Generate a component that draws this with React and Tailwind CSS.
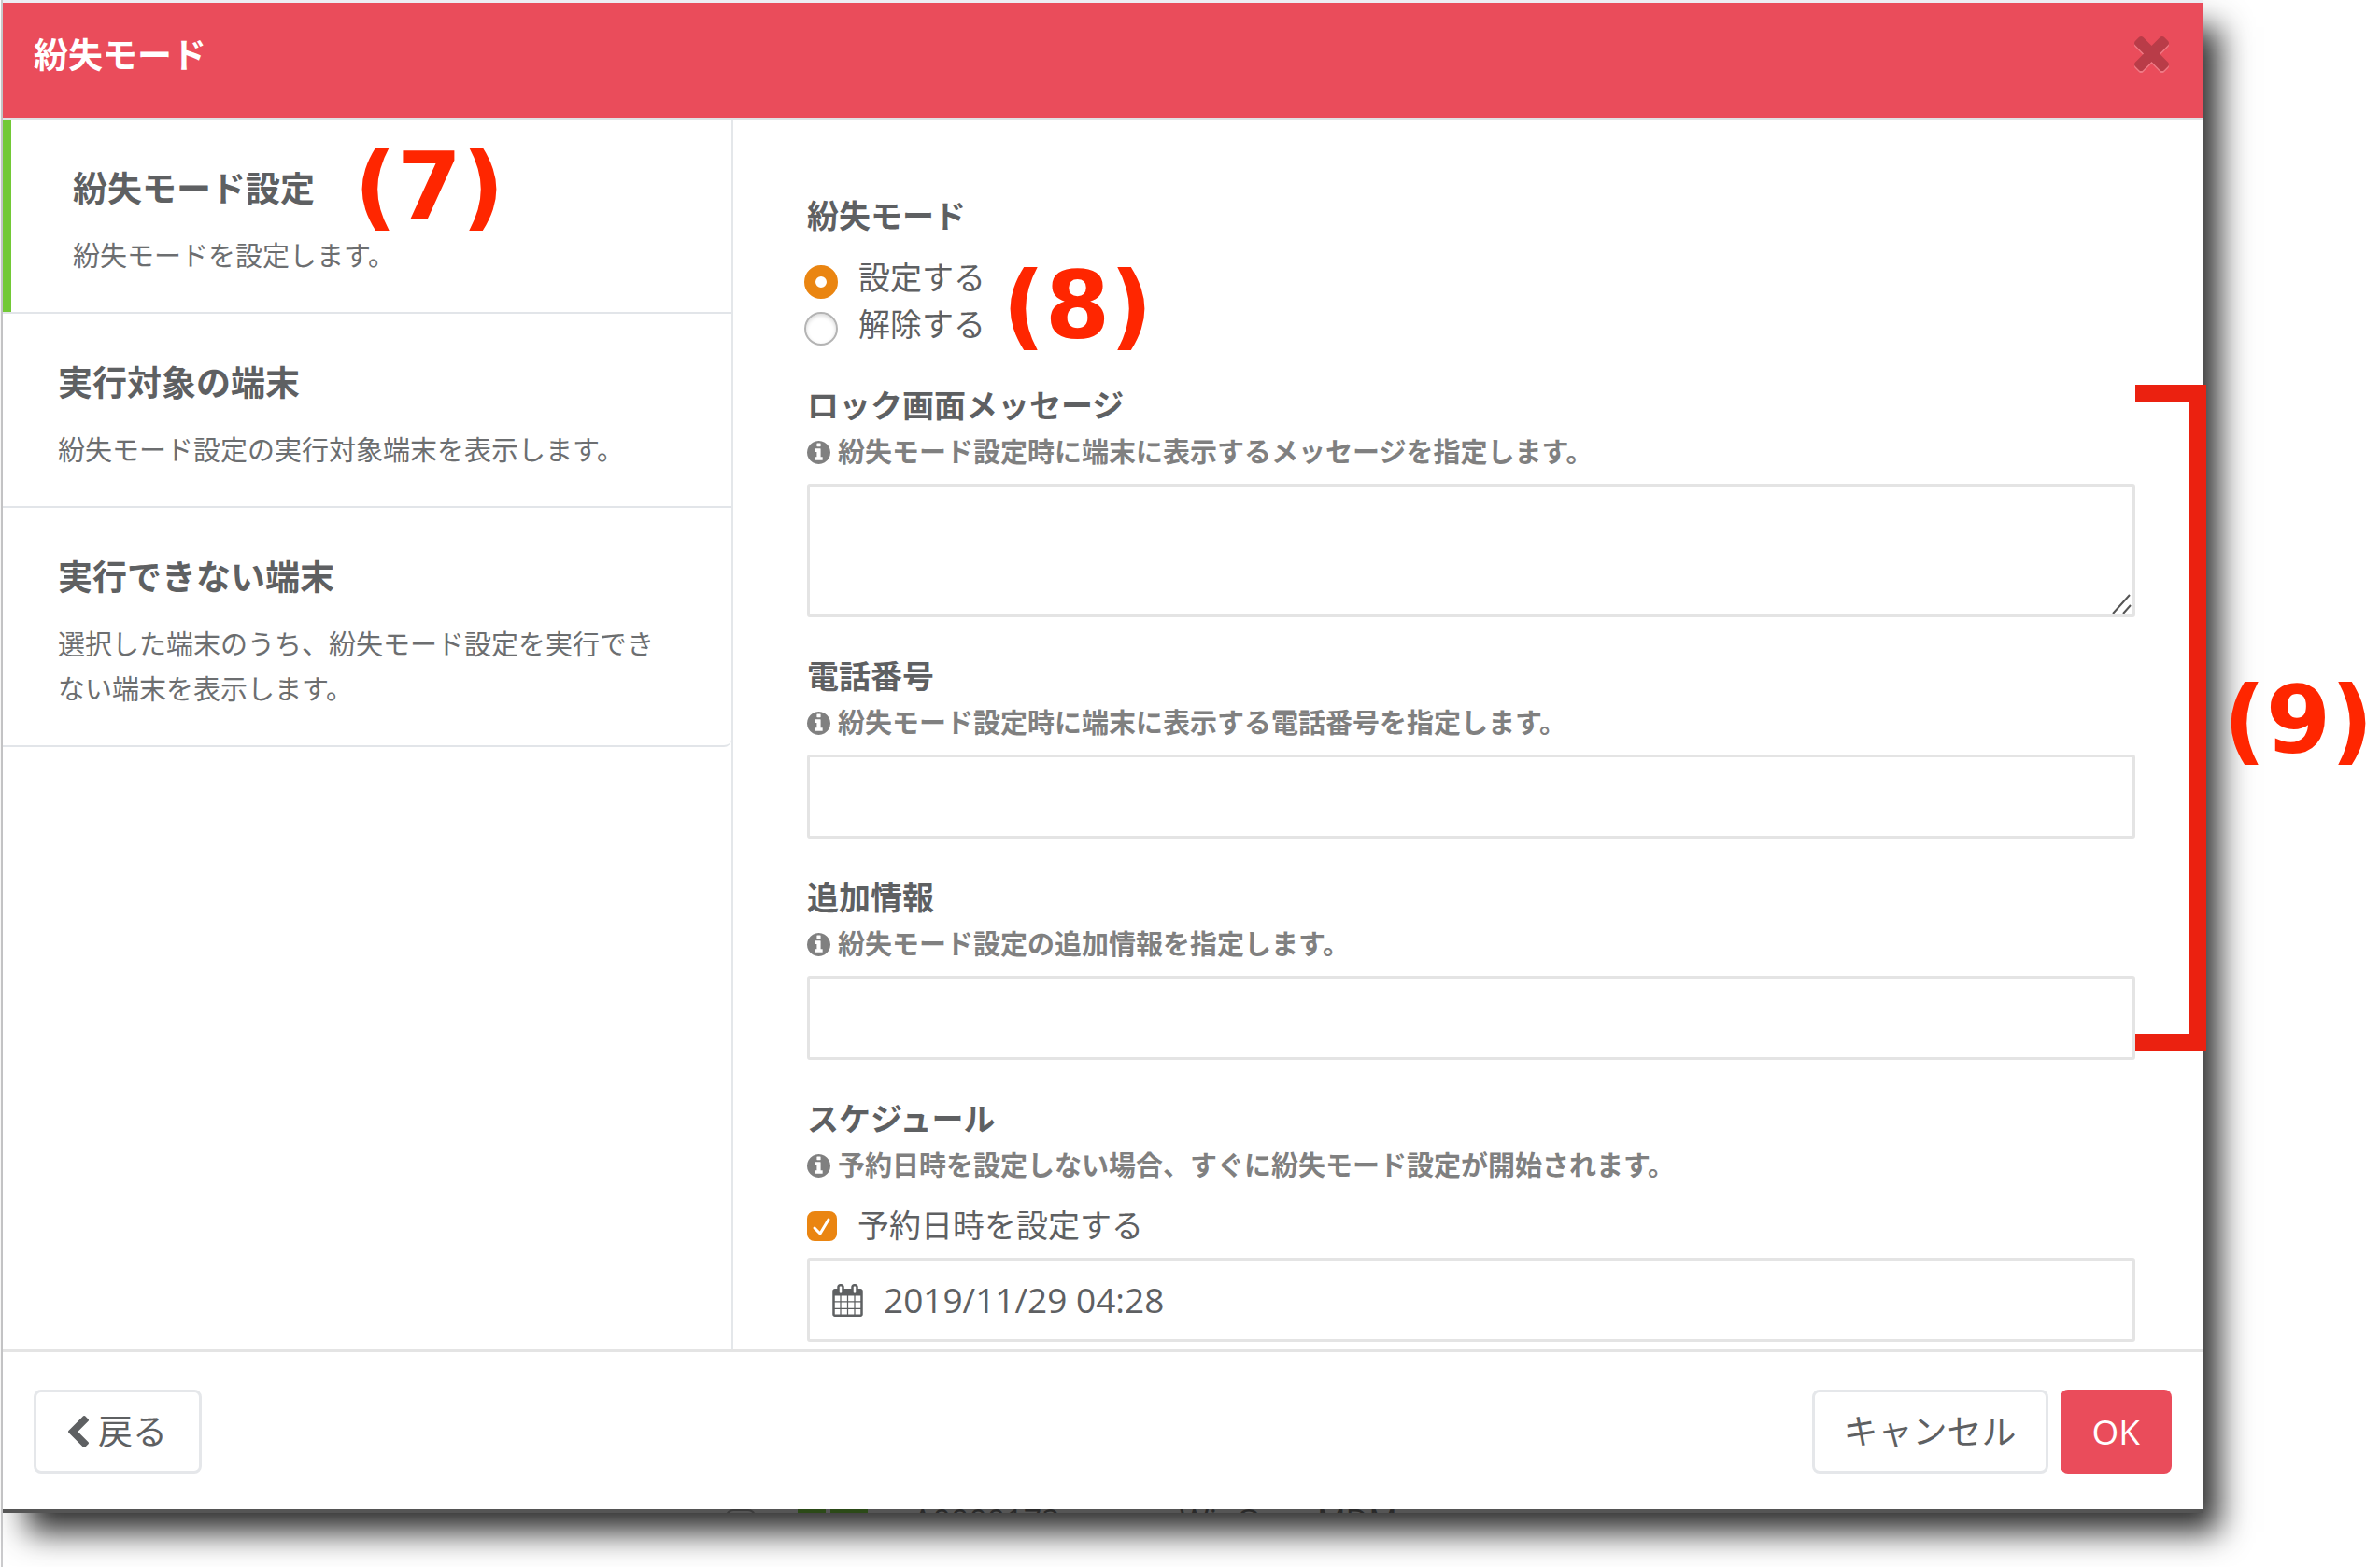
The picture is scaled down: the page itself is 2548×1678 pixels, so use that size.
import { useState } from "react";

const ICONS = {
  times:
    "M1490 1322q0 40-28 68l-136 136q-28 28-68 28t-68-28l-294-294-294 294q-28 28-68 28t-68-28l-136-136q-28-28-28-68t28-68l294-294-294-294q-28-28-28-68t28-68l136-136q28-28 68-28t68 28l294 294 294-294q28-28 68-28t68 28l136 136q28 28 28 68t-28 68l-294 294 294 294q28 28 28 68z",
  chevronLeft:
    "M1427 301l-531 531 531 531q19 19 19 45t-19 45l-166 166q-19 19-45 19t-45-19l-742-742q-19-19-19-45t19-45l742-742q19-19 45-19t45 19l166 166q19 19 19 45t-19 45z",
  info: "M1152 1376v-160q0-14-9-23t-23-9h-96v-512q0-14-9-23t-23-9h-320q-14 0-23 9t-9 23v160q0 14 9 23t23 9h96v320h-96q-14 0-23 9t-9 23v160q0 14 9 23t23 9h448q14 0 23-9t9-23zm-128-896v-160q0-14-9-23t-23-9h-192q-14 0-23 9t-9 23v160q0 14 9 23t23 9h192q14 0 23-9t9-23zm640 416q0 209-103 385.5t-279.5 279.5-385.5 103-385.5-103-279.5-279.5-103-385.5 103-385.5 279.5-279.5 385.5-103 385.5 103 279.5 279.5 103 385.5z",
  calendar:
    "M192 1664h288v-288h-288v288zm352 0h320v-288h-320v288zm-352-352h288v-320h-288v320zm352 0h320v-320h-320v320zm-352-384h288v-288h-288v288zm736 736h320v-288h-320v288zm-384-736h320v-288h-320v288zm768 736h288v-288h-288v288zm-384-352h320v-320h-320v320zm-352-864v-288q0-13-9.5-22.5t-22.5-9.5h-64q-13 0-22.5 9.5t-9.5 22.5v288q0 13 9.5 22.5t22.5 9.5h64q13 0 22.5-9.5t9.5-22.5zm736 864h288v-320h-288v320zm-384-384h320v-288h-320v288zm384 0h288v-288h-288v288zm32-480v-288q0-13-9.5-22.5t-22.5-9.5h-64q-13 0-22.5 9.5t-9.5 22.5v288q0 13 9.5 22.5t22.5 9.5h64q13 0 22.5-9.5t9.5-22.5zm384-64v1280q0 52-38 90t-90 38h-1408q-52 0-90-38t-38-90v-1280q0-52 38-90t90-38h128v-96q0-66 47-113t113-47h64q66 0 113 47t47 113v96h384v-96q0-66 47-113t113-47h64q66 0 113 47t47 113v96h128q52 0 90 38t38 90z",
};

function Icon({ name, viewBox, className }) {
  return (
    <svg viewBox={viewBox} fill="currentColor" aria-hidden="true" className={className}>
      <path d={ICONS[name]} />
    </svg>
  );
}

function Callout({ children, className }) {
  return (
    <span
      className={`pointer-events-none absolute left-full whitespace-nowrap font-['DejaVu_Sans',sans-serif] text-[100px] leading-none font-bold text-[#ff2600] ${className}`}
    >
      {children}
    </span>
  );
}

const STEPS = [
  { title: "紛失モード設定", text: "紛失モードを設定します。", active: true, callout: "(7)" },
  { title: "実行対象の端末", text: "紛失モード設定の実行対象端末を表示します。" },
  {
    title: "実行できない端末",
    text: "選択した端末のうち、紛失モード設定を実行できない端末を表示します。",
  },
];

function Step({ title, text, active, callout }) {
  return (
    <li className="border-b-2 border-[#e2e5e9] last:rounded-br-lg">
      <button
        type="button"
        className={`block w-full pt-[50px] pr-[70px] pb-9 text-left ${
          active ? "border-l-[9px] border-[#72c936] pl-[66px]" : "pl-[59px]"
        }`}
      >
        <span className="relative mb-6 block w-fit text-[37px] leading-[48px] font-bold">
          {title}
          {callout && <Callout className="-top-7 ml-[42px]">{callout}</Callout>}
        </span>
        <span className="block text-[29px] leading-[48px] text-[#6c6e70]">{text}</span>
      </button>
    </li>
  );
}

function Hint({ id, children }) {
  return (
    <p id={id} className="flex items-center gap-2 text-[29px] leading-[50px] font-bold text-[#808080]">
      <Icon name="info" viewBox="128 128 1536 1536" className="size-[25px] shrink-0" />
      {children}
    </p>
  );
}

function Field({ id, label, hint, multiline }) {
  const box = "mt-[9px] block w-full rounded-[3px] border-[3px] border-[#e4e4e4] bg-white px-6 outline-none";
  return (
    <div>
      <label htmlFor={id} className="block text-[34px] leading-[50px] font-bold">
        {label}
      </label>
      <Hint id={`${id}-hint`}>{hint}</Hint>
      {multiline ? (
        <div className="relative">
          <textarea id={id} aria-describedby={`${id}-hint`} className={`${box} h-[143px] resize-none`} />
          <svg
            viewBox="0 0 22 22"
            aria-hidden="true"
            className="pointer-events-none absolute right-[3px] bottom-[3px] size-[22px]"
            stroke="#555"
            strokeWidth="2"
          >
            <path d="M1 21L19 1M12 21L20 12" />
          </svg>
        </div>
      ) : (
        <input id={id} type="text" aria-describedby={`${id}-hint`} className={`${box} h-[90px]`} />
      )}
    </div>
  );
}

function Radio({ label, checked, onChange }) {
  return (
    <label className="flex w-fit items-start gap-[22px] text-[34px] leading-[50px]">
      <input
        type="radio"
        name="lost-mode"
        checked={checked}
        onChange={onChange}
        className="mt-3 size-9 appearance-none rounded-full border-2 border-[#b4b4b4] bg-white shadow-[inset_0_2px_4px_rgba(0,0,0,0.15)] checked:border-[12px] checked:border-[#ea8511] checked:shadow-none"
      />
      {label}
    </label>
  );
}

// The sliver of the device list that shows under the dialog's lower edge.
function ListBehind() {
  return (
    <div className="flex h-1 items-start overflow-hidden bg-[#555] pl-[774px] text-[34px] leading-[24px] whitespace-nowrap text-[#2a2a2a]">
      <span className="size-8 shrink-0 rounded-lg border-2 border-[#3c3c3c]" />
      <span className="ml-[45px] h-6 w-[30px] shrink-0 bg-[#2c4a18]" />
      <span className="ml-[5px] h-6 w-10 shrink-0 bg-[#2c4a18]" />
      <span className="ml-12 w-[286px] shrink-0">A0000172</span>
      <span className="w-[147px] shrink-0">WinOs</span>
      <span>MDM</span>
    </div>
  );
}

export default function App() {
  const [mode, setMode] = useState("set");
  const [scheduled, setScheduled] = useState(true);
  const [date, setDate] = useState("2019/11/29 04:28");
  const button = "flex h-[90px] items-center rounded-lg text-[37px] leading-[48px]";

  return (
    <div className="min-h-screen overflow-hidden bg-white pl-px font-['Open_Sans','Noto_Sans_CJK_JP',sans-serif] text-[#5e6062]">
      <div className="min-h-screen border-l-2 border-[#cbcbcd]">
        <div className="mr-[190px] shadow-[22px_25px_32px_-4px_rgba(0,0,0,0.82)]">
          <main className="border-t-[3px] border-[#ededf3] bg-white">
            <header className="flex items-start justify-between border-b-2 border-[#dfe2e5] bg-[#ea4c5b] pt-8 pr-9 pb-[43px] pl-[33px] text-white">
              <h1 className="text-[37px] leading-[48px] font-bold">紛失モード</h1>
              <button type="button" aria-label="閉じる" className="mt-1 text-[#b93c48]">
                <Icon
                  name="times"
                  viewBox="302 366 1188 1188"
                  className="size-[37px] drop-shadow-[0_2px_0_rgba(255,255,255,0.25)]"
                />
              </button>
            </header>

            <div className="flex">
              <nav className="w-[782px] shrink-0 border-r-2 border-[#e4e7ea]">
                <ul>
                  {STEPS.map((step) => (
                    <Step key={step.title} {...step} />
                  ))}
                </ul>
              </nav>

              <form id="lost-mode-form" className="min-w-0 flex-1 pt-[78px] pr-[72px] pb-2 pl-[79px]">
                <fieldset>
                  <legend className="text-[34px] leading-[50px] font-bold">紛失モード</legend>
                  <div className="relative mt-4 -ml-[3px] w-fit">
                    <Radio label="設定する" checked={mode === "set"} onChange={() => setMode("set")} />
                    <Radio label="解除する" checked={mode === "unset"} onChange={() => setMode("unset")} />
                    <Callout className="top-[6px] ml-[18px]">(8)</Callout>
                  </div>
                </fieldset>

                <div className="relative mt-[37px] flex flex-col gap-[38px]">
                  <Field
                    id="message"
                    label="ロック画面メッセージ"
                    hint="紛失モード設定時に端末に表示するメッセージを指定します。"
                    multiline
                  />
                  <Field id="phone" label="電話番号" hint="紛失モード設定時に端末に表示する電話番号を指定します。" />
                  <Field id="extra" label="追加情報" hint="紛失モード設定の追加情報を指定します。" />
                  <div className="pointer-events-none absolute top-[3px] bottom-[10px] left-full w-[76px] border-y-[18px] border-r-[18px] border-[#eb2110]" />
                  <Callout className="top-[313px] ml-[94px]">(9)</Callout>
                </div>

                <div className="mt-[38px]">
                  <h2 className="text-[34px] leading-[50px] font-bold">スケジュール</h2>
                  <Hint id="schedule-hint">予約日時を設定しない場合、すぐに紛失モード設定が開始されます。</Hint>
                  <label className="mt-[14px] flex w-fit items-start gap-[22px] text-[34px] leading-[50px]">
                    <span className="relative mt-[10px] size-8">
                      <input
                        type="checkbox"
                        checked={scheduled}
                        onChange={(e) => setScheduled(e.target.checked)}
                        className="peer block size-8 appearance-none rounded-lg border-2 border-[#b4b4b4] bg-white checked:border-[#ea8511] checked:bg-[#ea8511]"
                      />
                      <svg
                        viewBox="0 0 32 32"
                        aria-hidden="true"
                        className="pointer-events-none absolute inset-0 hidden peer-checked:block"
                        fill="none"
                        stroke="#fff"
                        strokeWidth="3"
                        strokeLinecap="round"
                        strokeLinejoin="round"
                      >
                        <path d="M8 18l6 6L23 9" />
                      </svg>
                    </span>
                    予約日時を設定する
                  </label>
                  <div className="mt-[10px] flex h-[90px] items-center gap-[22px] rounded-[3px] border-[3px] border-[#e4e4e4] px-6">
                    <Icon name="calendar" viewBox="64 0 1664 1792" className="h-[35px] w-[33px] shrink-0" />
                    <input
                      type="text"
                      aria-label="予約日時"
                      value={date}
                      onChange={(e) => setDate(e.target.value)}
                      className="w-full bg-transparent text-[37px] leading-[48px] outline-none"
                    />
                  </div>
                </div>
              </form>
            </div>

            <footer className="flex gap-[13px] border-t-[3px] border-[#e4e4e4] px-[33px] pt-10 pb-[38px]">
              <button type="button" className={`${button} mr-auto gap-[10px] border-[3px] border-[#e5e7ea] px-[34px]`}>
                <Icon name="chevronLeft" viewBox="410 26 1036 1612" className="h-9 w-[22px]" />
                戻る
              </button>
              <button type="button" className={`${button} border-[3px] border-[#e5e7ea] px-[31px]`}>
                キャンセル
              </button>
              <button type="submit" form="lost-mode-form" className={`${button} bg-[#ea4c5b] px-[34px] text-white`}>
                OK
              </button>
            </footer>
          </main>
          <ListBehind />
        </div>
      </div>
    </div>
  );
}
